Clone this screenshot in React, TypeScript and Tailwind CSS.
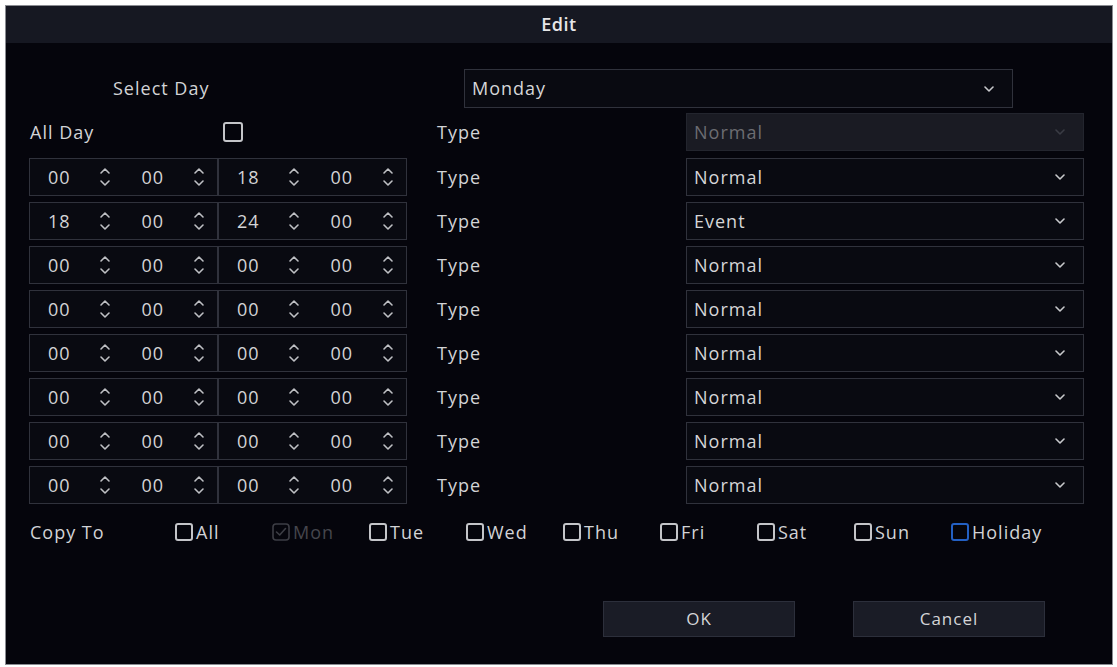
import React from 'react';

const font = { fontFamily: '"Open Sans", "Noto Sans", sans-serif' };

const times: [string, string, string, string][] = [
  ['00', '00', '18', '00'],
  ['18', '00', '24', '00'],
  ['00', '00', '00', '00'],
  ['00', '00', '00', '00'],
  ['00', '00', '00', '00'],
  ['00', '00', '00', '00'],
  ['00', '00', '00', '00'],
  ['00', '00', '00', '00'],
];

const types = ['Normal', 'Event', 'Normal', 'Normal', 'Normal', 'Normal', 'Normal', 'Normal'];

const days = ['All', 'Mon', 'Tue', 'Wed', 'Thu', 'Fri', 'Sat', 'Sun', 'Holiday'];

function Spinner() {
  return (
    <svg width="12" height="22" viewBox="0 0 12 22" fill="none" stroke="#bfc0c4" strokeWidth="1.6" strokeLinecap="round" strokeLinejoin="round">
      <path d="M2 7 L6 3 L10 7" />
      <path d="M2 15 L6 19 L10 15" />
    </svg>
  );
}

function Caret({ dim }: { dim?: boolean }) {
  return (
    <svg width="10" height="6" viewBox="0 0 10 6" fill="none" stroke={dim ? '#3a3c44' : '#c8c9cc'} strokeWidth="1.6" strokeLinecap="round" strokeLinejoin="round">
      <path d="M1 1 L5 5 L9 1" />
    </svg>
  );
}

function TimeHalf({ value }: { value: string }) {
  return (
    <div className="flex items-center w-[94px] pl-[18px]">
      <span className="w-[51px] text-[#d4d4d6]">{value}</span>
      <Spinner />
    </div>
  );
}

function TimeBox({ h, m }: { h: string; m: string }) {
  return (
    <div className="flex items-center w-[189px] h-full border border-[#30323c] bg-[#090a11]">
      <TimeHalf value={h} />
      <TimeHalf value={m} />
    </div>
  );
}

function Select({ value, width, disabled }: { value: string; width: string; disabled?: boolean }) {
  return (
    <div
      className={`flex items-center justify-between h-full pl-[7px] pr-[18px] border ${width} ${
        disabled ? 'bg-[#1a1b23] border-[#23252e] text-[#6c6d72]' : 'bg-[#090a11] border-[#30323c] text-[#d6d6d8]'
      }`}
    >
      <span>{value}</span>
      <Caret dim={disabled} />
    </div>
  );
}

function Check({ state }: { state?: 'checked' | 'blue' }) {
  if (state === 'checked') {
    return (
      <svg width="18" height="18" viewBox="0 0 18 18" fill="none">
        <rect x="1" y="1" width="16" height="16" rx="3" stroke="#3d3e45" strokeWidth="1.6" />
        <path d="M4.5 9 L7.7 12 L13.5 5.5" stroke="#3d3e45" strokeWidth="1.6" strokeLinecap="round" strokeLinejoin="round" />
      </svg>
    );
  }
  return (
    <span
      className={`block w-[18px] h-[18px] rounded-[3px] border-2 ${
        state === 'blue' ? 'border-[#2360c4]' : 'border-[#c4c5c9]'
      }`}
    />
  );
}

export default function App() {
  return (
    <div className="w-[1117px] h-[667px] bg-white pt-[5px] pl-[5px] overflow-hidden" style={font}>
      <div className="w-[1108px] h-[660px] border border-[#8a8c92] bg-[#05050c] flex flex-col text-[18px] tracking-[1px] text-[#d2d3d6]">
        {/* Title */}
        <div className="h-[37px] flex-shrink-0 bg-[#161822] flex items-center justify-center text-[#e6e6e8] font-semibold tracking-[0.5px]">
          Edit
        </div>

        <div className="flex flex-col pl-[23px] pt-[26px]">
          {/* Select day */}
          <div className="flex items-center h-[39px]">
            <div className="w-[435px] pl-[84px]">Select Day</div>
            <Select value="Monday" width="w-[549px]" />
          </div>

          {/* All day */}
          <div className="flex items-center h-[38px] mt-[5px]">
            <div className="flex items-center w-[379px]">
              <span className="w-[194px] pl-[1px]">All Day</span>
              <span className="block w-[20px] h-[20px] rounded-[3px] border-2 border-[#c4c5c9]" />
            </div>
            <div className="w-[278px] pl-[29px]">Type</div>
            <Select value="Normal" width="w-[398px]" disabled />
          </div>

          {/* Periods */}
          <div className="flex flex-col gap-[6px] mt-[7px]">
            {times.map((t, i) => (
              <div key={i} className="flex items-center h-[38px]">
                <div className="flex w-[379px] h-full">
                  <TimeBox h={t[0]} m={t[1]} />
                  <TimeBox h={t[2]} m={t[3]} />
                </div>
                <div className="w-[278px] pl-[29px]">Type</div>
                <Select value={types[i]} width="w-[398px]" />
              </div>
            ))}
          </div>

          {/* Copy to */}
          <div className="flex items-center h-[38px] mt-[9px]">
            <span className="w-[146px] pl-[1px]">Copy To</span>
            {days.map(d => (
              <div key={d} className="flex items-center gap-[3px] w-[97px]">
                <Check state={d === 'Mon' ? 'checked' : d === 'Holiday' ? 'blue' : undefined} />
                <span className={d === 'Mon' ? 'text-[#45464d]' : ''}>{d}</span>
              </div>
            ))}
          </div>

          {/* Buttons */}
          <div className="flex gap-[58px] ml-[574px] mt-[50px]">
            <button className="w-[192px] h-[36px] bg-[#1a1c26] border border-[#2c2f3b] text-[#d4d5d8] text-[17px]">OK</button>
            <button className="w-[192px] h-[36px] bg-[#1a1c26] border border-[#2c2f3b] text-[#d4d5d8] text-[17px]">Cancel</button>
          </div>
        </div>
      </div>
    </div>
  );
}
